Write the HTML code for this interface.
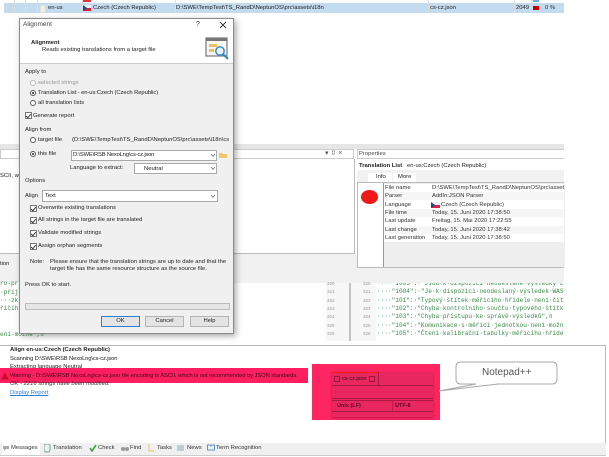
<!DOCTYPE html>
<html><head><meta charset="utf-8"><style>
html,body{margin:0;padding:0;background:#fff}
#p{position:relative;width:609px;height:457px;overflow:hidden;background:#fff;font-family:"Liberation Sans",sans-serif;font-size:5.85px;color:#222;filter:blur(.35px)}
#p div,#p span.t,#p svg{position:absolute}
.t{position:absolute;white-space:nowrap;line-height:8px;height:8px}
.m{font-family:"Liberation Mono",monospace;font-size:6.1px;color:#3b8a4a}
.n{font-size:4.5px;color:#999}
.r{width:6px;height:6px;border:1px solid #555;border-radius:50%;background:#fff;box-sizing:border-box}
.r.on:after{content:"";position:absolute;left:1px;top:1px;width:2.4px;height:2.4px;border-radius:50%;background:#222}
.c{width:7px;height:7px;border:1px solid #777;background:#fff;box-sizing:border-box}
.c:after{content:"";position:absolute;left:1.2px;top:.2px;width:2px;height:3.6px;border:solid #333;border-width:0 1px 1px 0;transform:rotate(40deg)}
.i{background:#fff;border:1px solid #aaa;box-sizing:border-box}
.a{width:0;height:0}
.b{background:#e4e4e4;border:1px solid #b5b5b5;box-sizing:border-box;text-align:center;line-height:9px;height:11px;width:39px;top:316px}
.l{left:385px;color:#333}.v{left:432px;color:#333}
.g{background:#f6f6f6;height:8px;left:384px;width:180px}
</style></head><body><div id="p">

<!-- top list -->
<div style="left:4px;top:3px;width:560px;height:10px;background:#c3dbee"></div>
<div style="left:14px;top:0;width:1px;height:13px;background:#ddd"></div>
<div style="left:25px;top:0;width:1px;height:13px;background:#ddd"></div>
<div style="left:37px;top:0;width:1px;height:13px;background:#ddd"></div>
<div style="left:82px;top:0;width:1px;height:13px;background:#ddd"></div>
<div style="left:175px;top:0;width:1px;height:13px;background:#ddd"></div>
<div style="left:428px;top:0;width:1px;height:13px;background:#ddd"></div>
<div style="left:514px;top:0;width:1px;height:13px;background:#ddd"></div>
<div style="left:531px;top:0;width:1px;height:13px;background:#ddd"></div>
<div style="left:40px;top:5px;width:4px;height:6px;background:#f4efd8;border:1px solid #ddd"></div>
<div style="left:83px;top:0;width:8px;height:2px;background:#d33"></div>
<div style="left:83px;top:5px;width:8px;height:3px;background:#eef"></div>
<div style="left:83px;top:8px;width:8px;height:3px;background:#d8203a"></div>
<div style="left:83px;top:5px;width:0;height:0;border-left:4px solid #1a4a9a;border-top:3px solid transparent;border-bottom:3px solid transparent"></div>
<span class="t" style="left:48px;top:4px">en-us</span>
<span class="t" style="left:93px;top:4px">Czech (Czech Republic)</span>
<span class="t" style="left:176px;top:4px">D:\SWE\TempTest\TS_RandD\NeptunOS\prc\assets\i18n</span>
<span class="t" style="left:430px;top:4px">cs-cz.json</span>
<span class="t" style="left:516px;top:4px">2049</span>
<div style="left:533px;top:6px;width:6px;height:4px;background:#c80000"></div>
<span class="t" style="left:545px;top:4px">0 %</span>
<div style="left:533px;top:0;width:6px;height:2px;background:#6aaee0"></div>
<span class="t" style="left:176px;top:-6px">D:\SWE\TempTest\TS_RandD\NeptunOS\prc\assets\i18n\project.json</span>
<span class="t" style="left:430px;top:-6px">project</span>

<!-- mid area -->
<div style="left:0;top:144px;width:564px;height:5px;background:#e6e6e6"></div>
<div style="left:0;top:149px;width:354px;height:10px;background:#fff;border:1px solid #ccc;box-sizing:border-box"></div>
<div style="left:0;top:159px;width:354px;height:95px;background:#fff;border-right:1px solid #bbb;box-sizing:content-box"></div>
<div style="left:0;top:253px;width:354px;height:1px;background:#bbb"></div>
<div style="left:0;top:254px;width:564px;height:29px;background:#f1f1f1"></div>
<div style="left:0;top:283px;width:564px;height:58px;background:#fff"></div>
<span class="t" style="left:0;top:172px">SCII, wi</span>
<span class="t" style="left:0;top:260px">tion</span>
<span class="t" style="left:325px;top:150px;font-size:7px;color:#555">▾ ⇳ ×</span>

<!-- properties -->
<div style="left:357px;top:149px;width:207px;height:119px;background:#f1f1f1"></div>
<div style="left:357px;top:149px;width:207px;height:10px;background:#fff;border:1px solid #ccc;border-right:0;box-sizing:border-box"></div>
<span class="t" style="left:359px;top:150px;color:#444">Properties</span>
<div style="left:357px;top:159px;width:207px;height:11px;background:#fff"></div>
<span class="t" style="left:359px;top:162px;font-weight:bold">Translation List</span>
<span class="t" style="left:407px;top:162px">en-us:Czech (Czech Republic)</span>
<div style="left:368px;top:173px;width:24px;height:9px;background:#fff"></div>
<div style="left:393px;top:173px;width:23px;height:9px;background:#fff"></div>
<span class="t" style="left:376px;top:173px">Info</span>
<span class="t" style="left:398px;top:173px">More</span>
<div style="left:357px;top:182px;width:207px;height:86px;background:#fff;border:1px solid #bbb;border-right:0;box-sizing:border-box"></div>
<div style="left:383px;top:183px;width:181px;height:84px;background:#eee;border-left:1px solid #999"></div>
<div style="left:384px;top:184px;width:180px;height:58px;background:#fff"></div>
<div class="g" style="top:192px"></div><div class="g" style="top:209px"></div><div class="g" style="top:226px"></div>
<div style="left:361px;top:190px;width:17px;height:14px;border-radius:50%;background:#f01818"></div>
<span class="t l" style="top:184px">File name</span><span class="t v" style="top:184px;width:132px;overflow:hidden">D:\SWE\TempTest\TS_RandD\NeptunOS\prc\assets\i18n\cs-cz.json</span>
<span class="t l" style="top:192px">Parser</span><span class="t v" style="top:192px">AddIn:JSON Parser</span>
<span class="t l" style="top:201px">Language</span><span class="t v" style="top:201px;left:441px">Czech (Czech Republic)</span>
<div style="left:431px;top:202px;width:9px;height:3px;background:#eef"></div>
<div style="left:431px;top:205px;width:9px;height:3px;background:#d8203a"></div>
<div style="left:431px;top:202px;width:0;height:0;border-left:4px solid #1a4a9a;border-top:3px solid transparent;border-bottom:3px solid transparent"></div>
<span class="t l" style="top:209px">File time</span><span class="t v" style="top:209px">Today, 15. Juni 2020 17:38:50</span>
<span class="t l" style="top:217px">Last update</span><span class="t v" style="top:217px">Freitag, 15. Mai 2020 17:22:55</span>
<span class="t l" style="top:226px">Last change</span><span class="t v" style="top:226px">Today, 15. Juni 2020 17:38:42</span>
<span class="t l" style="top:234px">Last generation</span><span class="t v" style="top:234px">Today, 15. Juni 2020 17:38:50</span>

<!-- code -->
<div style="left:326px;top:283px;width:50px;height:58px;background:#f7f7f7"></div>
<div style="left:349px;top:283px;width:2px;height:58px;background:#c4c4c4"></div>
<span class="t n" style="left:327px;top:280px">320</span><span class="t n" style="left:363px;top:280px">320</span>
<span class="t n" style="left:327px;top:288px">321</span><span class="t n" style="left:363px;top:288px">321</span>
<span class="t n" style="left:327px;top:297px">322</span><span class="t n" style="left:363px;top:297px">322</span>
<span class="t n" style="left:327px;top:305px">323</span><span class="t n" style="left:363px;top:305px">323</span>
<span class="t n" style="left:327px;top:313px">324</span><span class="t n" style="left:363px;top:313px">324</span>
<span class="t n" style="left:327px;top:322px">325</span><span class="t n" style="left:363px;top:322px">325</span>
<span class="t n" style="left:327px;top:330px">326</span><span class="t n" style="left:363px;top:330px">326</span>
<div style="left:376px;top:283px;width:188px;height:58px;overflow:hidden">
<span class="t m" style="left:1px;top:-3px">····"1003":·"Jsou·k·dispozici·neodeslané·výsledky·L</span>
<span class="t m" style="left:1px;top:5px">····"1004":·"Je·k·dispozici·neodeslaný·výsledek·WAS</span>
<span class="t m" style="left:1px;top:14px">····"101":·"Typový·štítek·měřicího·hřídele·není·čit</span>
<span class="t m" style="left:1px;top:22px">····"102":·"Chyba·kontrolního·součtu·typového·štítk</span>
<span class="t m" style="left:1px;top:30px">····"103":·"Chyba·přístupu·ke·správě·výsledků",¤</span>
<span class="t m" style="left:1px;top:39px">····"104":·"Komunikace·s·měřicí·jednotkou·není·možn</span>
<span class="t m" style="left:1px;top:47px">····"105":·"Čtení·kalibrační·tabulky·měřicího·hříde</span>
</div>
<span class="t m" style="left:0;top:280px">ro-pr</span>
<span class="t m" style="left:0;top:289px">·příj</span>
<span class="t m" style="left:0;top:297px">···zk</span>
<span class="t m" style="left:0;top:305px">říčíh</span>
<span class="t m" style="left:0;top:331px">ení-možné",¤</span>

<!-- dialog -->
<div style="left:19px;top:18px;width:215px;height:316px;background:#f0f0f0;border:1px solid #8a8a8a;box-sizing:border-box;box-shadow:2px 2px 6px rgba(0,0,0,.35)"></div>
<div style="left:20px;top:19px;width:213px;height:44px;background:#fff;border-bottom:1px solid #ccc"></div>
<span class="t" style="left:23px;top:21px;font-size:6.5px;color:#444">Alignment</span>
<span class="t" style="left:196px;top:21px;font-size:7px;color:#333">?</span>
<svg style="left:219px;top:21px" width="8" height="8"><path d="M1 1L7 7M7 1L1 7" stroke="#333" stroke-width=".9"/></svg>
<span class="t" style="left:31px;top:39px;font-weight:bold">Alignment</span>
<span class="t" style="left:42px;top:46px">Reads existing translations from a target file</span>
<svg style="left:205px;top:37px" width="25" height="25"><rect x="1" y="1" width="21" height="18" fill="#f6f6f6" stroke="#777" stroke-width="1.2"/><rect x="1" y="1" width="21" height="3" fill="#777"/><rect x="4" y="7" width="8" height="3" fill="#f0c060"/><rect x="4" y="12" width="5" height="3" fill="#f0c060"/><circle cx="15" cy="14" r="4.2" fill="#e8f4fc" stroke="#2e86c8" stroke-width="1.4"/><path d="M18 17L23 22" stroke="#2e86c8" stroke-width="2"/></svg>

<span class="t" style="left:25px;top:68px">Apply to</span>
<div class="r" style="left:30px;top:80px;border-color:#bbb"></div><span class="t" style="left:38px;top:79px;color:#999">selected strings</span>
<div class="r on" style="left:30px;top:90px"></div><span class="t" style="left:38px;top:89px;letter-spacing:-.08px">Translation List - en-us:Czech (Czech Republic)</span>
<div class="r" style="left:30px;top:100px"></div><span class="t" style="left:38px;top:99px">all translation lists</span>
<div class="c" style="left:25px;top:112px"></div><span class="t" style="left:33px;top:112px">Generate report</span>
<span class="t" style="left:25px;top:126px">Align from</span>
<div class="r" style="left:30px;top:137px"></div><span class="t" style="left:38px;top:136px">target file</span>
<span class="t" style="left:72px;top:136px;width:157px;overflow:hidden">(D:\SWE\TempTest\TS_RandD\NeptunOS\prc\assets\i18n\cs-cz.json</span>
<div class="r on" style="left:30px;top:151px"></div><span class="t" style="left:38px;top:150px">this file</span>
<div class="i" style="left:71px;top:150px;width:146px;height:11px"></div>
<span class="t" style="left:73px;top:151px;letter-spacing:-.2px">D:\SWE\RSB NexoLng\cs-cz.json</span>
<svg style="left:210px;top:153px" width="6" height="5"><path d="M1 1L3 3.5L5 1" fill="none" stroke="#666" stroke-width=".7"/></svg>
<svg style="left:219px;top:151px" width="9" height="8"><path d="M0 2H3L4 3H8V7H0Z" fill="#f0c868"/></svg>
<span class="t" style="left:70px;top:164px">Language to extract:</span>
<div class="i" style="left:134px;top:163px;width:83px;height:11px"></div>
<span class="t" style="left:144px;top:165px">Neutral</span>
<svg style="left:210px;top:166px" width="6" height="5"><path d="M1 1L3 3.5L5 1" fill="none" stroke="#666" stroke-width=".7"/></svg>
<span class="t" style="left:25px;top:177px">Options</span>
<span class="t" style="left:25px;top:192px">Align</span>
<div class="i" style="left:42px;top:190px;width:176px;height:12px"></div>
<span class="t" style="left:45px;top:192px">Text</span>
<svg style="left:210px;top:194px" width="6" height="5"><path d="M1 1L3 3.5L5 1" fill="none" stroke="#666" stroke-width=".7"/></svg>
<div class="c" style="left:30px;top:205px"></div><span class="t" style="left:38px;top:204px">Overwrite existing translations</span>
<div class="c" style="left:30px;top:217px"></div><span class="t" style="left:38px;top:216px">All strings in the target file are translated</span>
<div class="c" style="left:30px;top:230px"></div><span class="t" style="left:38px;top:229px">Validate modified strings</span>
<div class="c" style="left:30px;top:243px"></div><span class="t" style="left:38px;top:242px">Assign orphan segments</span>
<span class="t" style="left:30px;top:258px">Note:</span>
<span class="t" style="left:50px;top:258px">Please ensure that the translation strings are up to date and that the</span>
<span class="t" style="left:50px;top:265px">target file has the same resource structure as the source file.</span>
<span class="t" style="left:25px;top:281px">Press OK to start.</span>
<div style="left:25px;top:303px;width:205px;height:7px;background:#e6e6e6;border:1px solid #bcbcbc;box-sizing:border-box"></div>
<div class="b" style="left:101px;border-color:#2a7fd0">OK</div>
<div class="b" style="left:145px">Cancel</div>
<div class="b" style="left:190px">Help</div>

<!-- bottom panel -->
<div style="left:0;top:345px;width:606px;height:99px;background:#fff;border:1px solid #b8b8b8;border-left:0;box-sizing:border-box"></div>
<div style="left:0;top:443px;width:606px;height:12px;background:#f0f0f0;border-bottom:1px solid #ccc"></div>
<span class="t" style="left:10px;top:346px;font-weight:bold">Align en-us:Czech (Czech Republic)</span>
<span class="t" style="left:10px;top:355px;letter-spacing:-.15px">Scanning D:\SWE\RSB NexoLng\cs-cz.json</span>
<span class="t" style="left:10px;top:363px">Extracting language Neutral</span>
<div style="left:0;top:368px;width:308px;height:15px;background:#ff1f60"></div>
<svg style="left:1px;top:372px" width="8" height="8"><path d="M4 0L8 7.5H0Z" fill="#c8102e"/></svg>
<span class="t" style="left:10px;top:372px;color:#3a0a15;letter-spacing:-.09px">Warning - D:\SWE\RSB NexoLng\cs-cz.json file encoding is ASCII, which is not recommended by JSON standards.</span>
<span class="t" style="left:10px;top:380px;font-style:italic;color:#333">OK - 2216 strings have been modified.</span>
<span class="t" style="left:10px;top:389px;color:#2b7cd3;text-decoration:underline">Display Report</span>

<div style="left:2px;top:443px;width:38px;height:12px;background:#fff"></div>
<span class="t" style="left:11px;top:444px;color:#333">Messages</span>
<svg style="left:3px;top:445px" width="7" height="7"><path d="M0 1H6V4H3L1 6V4H0Z" fill="#aaa"/></svg>
<svg style="left:44px;top:444px" width="7" height="9"><rect x="0" y="0" width="6" height="8" rx="2" fill="none" stroke="#8ab09a" stroke-width="1.2"/></svg>
<span class="t" style="left:53px;top:444px;color:#333">Translation</span>
<svg style="left:89px;top:444px" width="8" height="8"><path d="M1 4L3 7L7 1" fill="none" stroke="#3aa34a" stroke-width="1.6"/></svg>
<span class="t" style="left:98px;top:444px;color:#333">Check</span>
<svg style="left:121px;top:445px" width="8" height="7"><circle cx="2" cy="4" r="2" fill="#999"/><circle cx="6" cy="4" r="2" fill="#999"/></svg>
<span class="t" style="left:130px;top:444px;color:#333">Find</span>
<svg style="left:148px;top:444px" width="7" height="8"><path d="M1 0V7H6" fill="none" stroke="#e8c860" stroke-width="1"/></svg>
<span class="t" style="left:157px;top:444px;color:#333">Tasks</span>
<div style="left:177px;top:445px;width:7px;height:6px;background:#c0ccd4"></div>
<span class="t" style="left:187px;top:444px;color:#333">News</span>
<svg style="left:207px;top:444px" width="8" height="8"><path d="M.5 1H3.5L4 2L4.500 1H7.500V6H.5Z" fill="#e8f2fa" stroke="#3a78b8" stroke-width=".8"/></svg>
<span class="t" style="left:216px;top:444px;color:#333">Term Recognition</span>

<!-- highlighted notepad++ -->
<div style="left:312px;top:364px;width:128px;height:56px;background:#ff2462"></div>
<div style="left:332px;top:372px;width:101px;height:45px;background:#e8275f;box-shadow:0 1px 2px rgba(120,0,40,.5)"></div>
<div style="left:332px;top:372px;width:46px;height:1px;background:#ff1a10"></div>
<div style="left:378px;top:372px;width:1px;height:13px;background:#a81843"></div>
<div style="left:332px;top:385px;width:101px;height:1px;background:#a81843"></div>
<div style="left:332px;top:398px;width:101px;height:1px;background:#a81843"></div>
<div style="left:332px;top:400px;width:101px;height:1px;background:#a81843"></div>
<div style="left:392px;top:400px;width:1px;height:11px;background:#c01c4d"></div>
<div style="left:332px;top:411px;width:101px;height:1px;background:#a81843"></div>
<div style="left:334px;top:376px;width:6px;height:6px;border:1px solid #9c1740;box-sizing:border-box"></div>
<span class="t" style="left:342px;top:375px;font-size:5.5px;color:#3a0a1e">cs-cz.json</span>
<div style="left:369px;top:376px;width:6px;height:6px;border:1px solid #9c1740;box-sizing:border-box"></div>
<span class="t" style="left:337px;top:402px;font-size:5.5px;color:#5a0a26;font-weight:bold">Unix (LF)</span>
<span class="t" style="left:395px;top:402px;font-size:5.5px;color:#5a0a26;font-weight:bold">UTF-8</span>

<svg style="left:436px;top:358px" width="125" height="36"><path d="M3 33L40 26L25 26Q20 26 20 21V9Q20 4 25 4H116Q121 4 121 9V21Q121 26 116 26H62L3 33" fill="#fff" stroke="#a8a8a8" stroke-width="1"/></svg>
<span class="t" style="left:482px;top:369px;font-size:10px;color:#555">Notepad++</span>

</div></body></html>
